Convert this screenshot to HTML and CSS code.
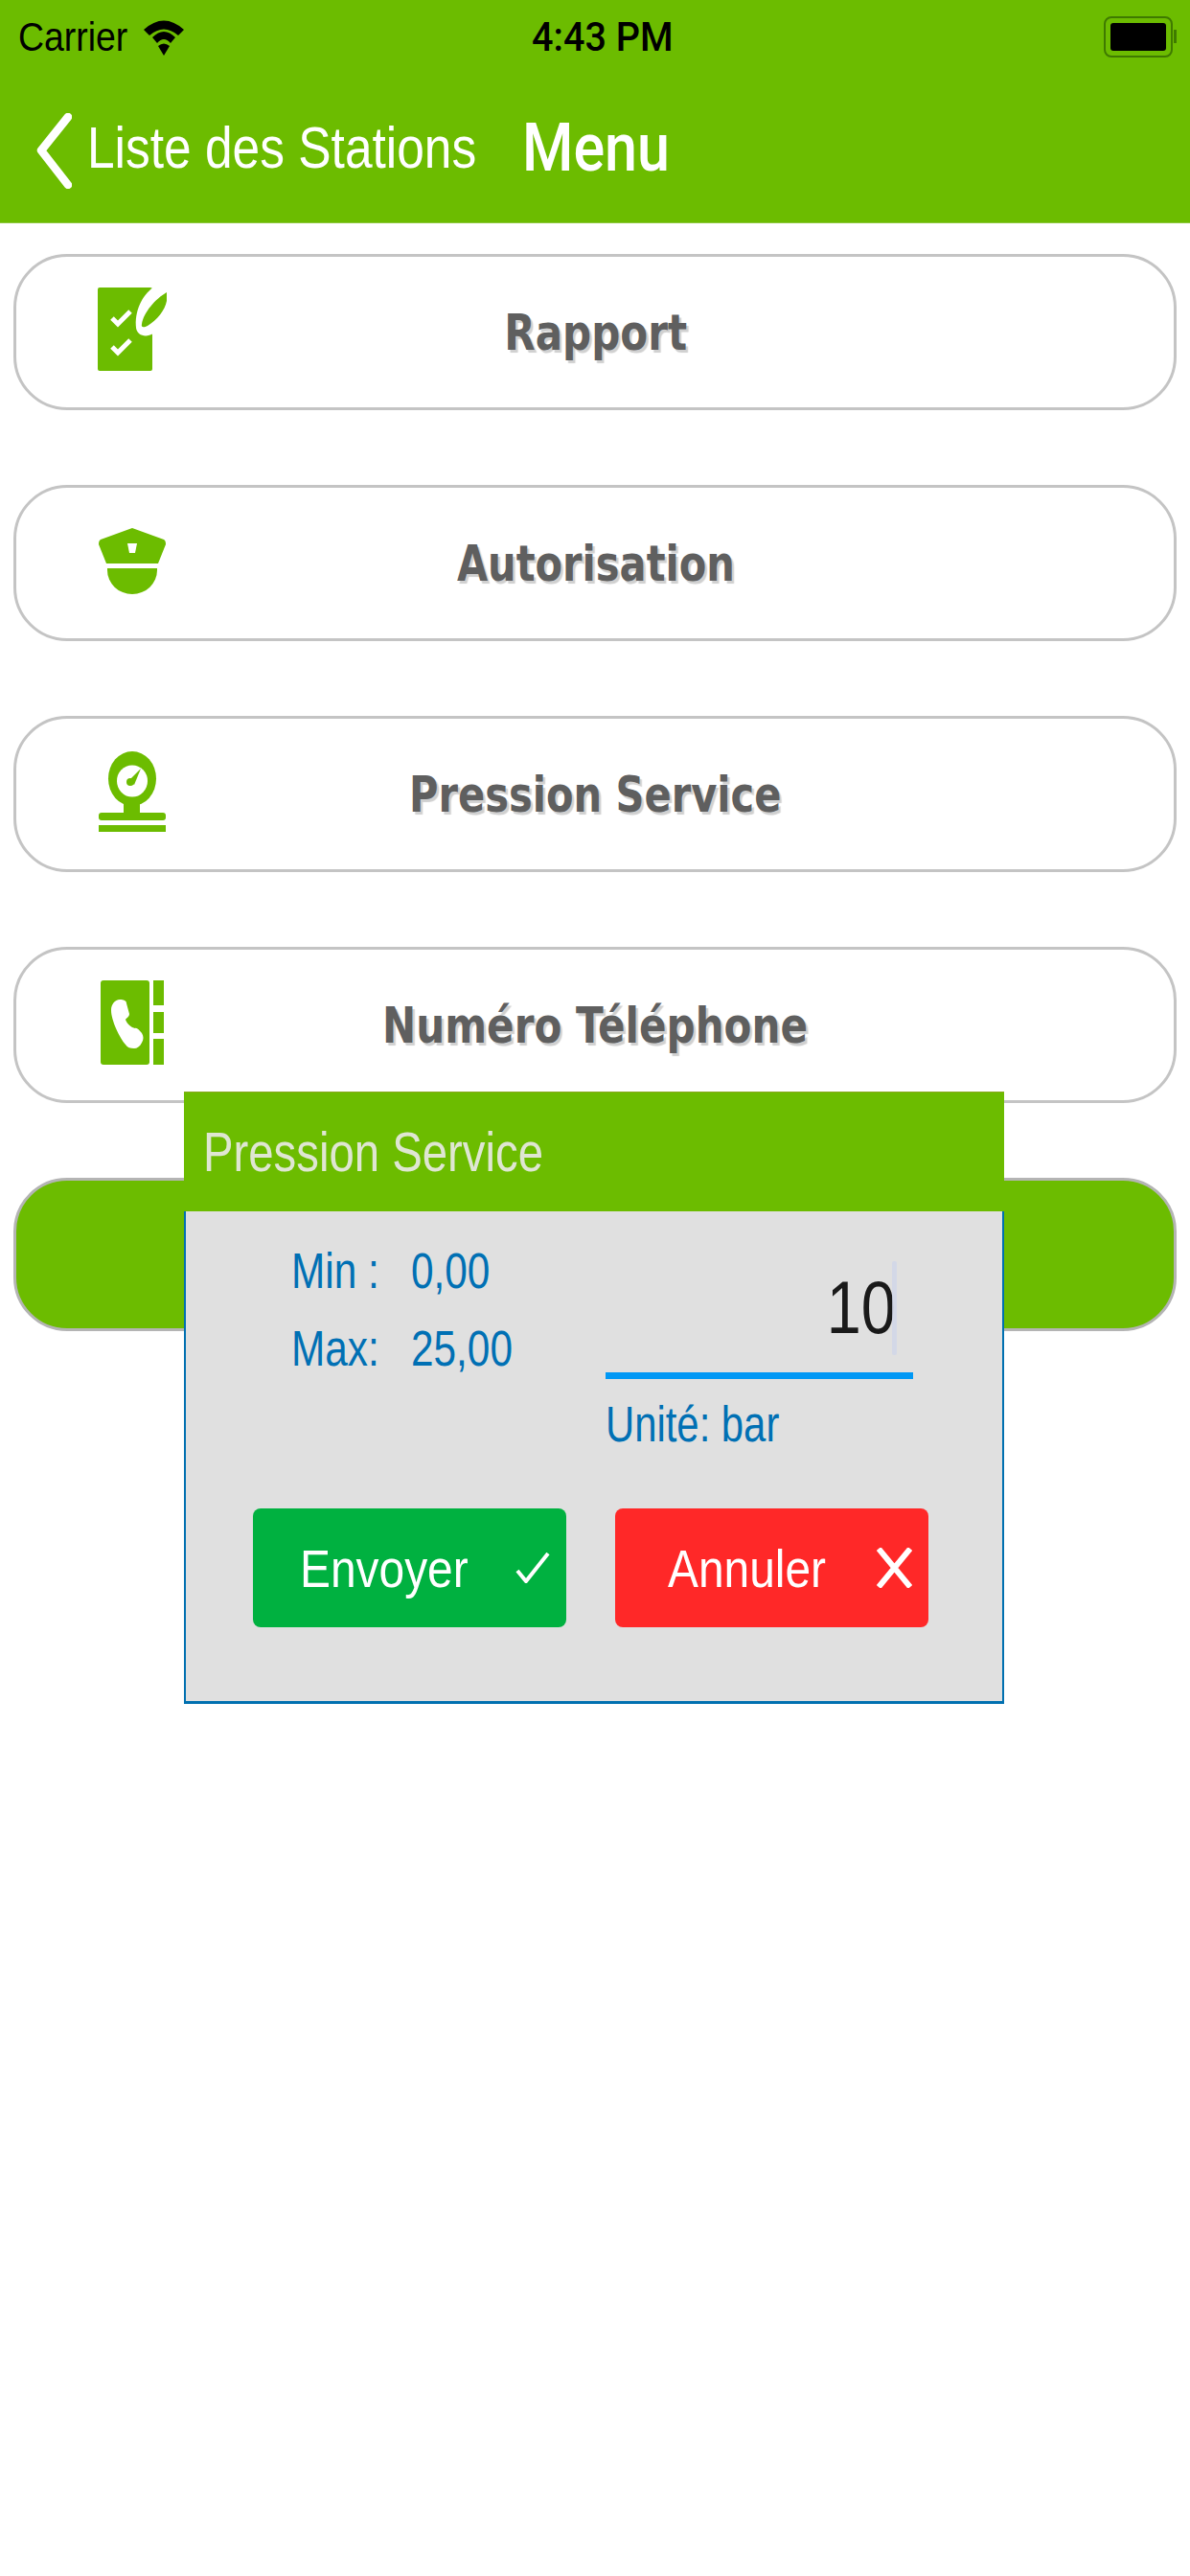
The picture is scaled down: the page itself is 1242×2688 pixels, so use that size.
FILE: index.html
```html
<!DOCTYPE html>
<html lang="fr">
<head>
  <meta charset="UTF-8">
  <title>Menu</title>
  <link rel="stylesheet" href="styles.css">
</head>
<body>

  <div class="header">
    <div class="status-bar">
      <div class="status-left">
        <span class="squeeze carrier">Carrier</span>
        <svg class="wifi" width="42" height="37" viewBox="0 0 42 37">
          <path d="M0 10Q21-9 42 10L36 16Q21 3 6 16Z"/>
          <path d="M9 18Q21 6 33 18L28 24Q21 16 14 24Z"/>
          <path d="M15 27Q21 22 27 27L21 37Z"/>
        </svg>
      </div>
      <span class="squeeze time">4:43 PM</span>
      <div class="battery"><div class="battery-fill"></div></div>
    </div>
    <div class="nav-bar">
      <svg class="back-icon" width="37" height="79" viewBox="0 0 37 79">
        <path d="M33 4L5 39L33 75" fill="none" stroke="#fff" stroke-width="8.5" stroke-linecap="round" stroke-linejoin="round"/>
      </svg>
      <div class="back-label"><span class="squeeze">Liste des Stations</span></div>
      <span class="squeeze nav-title">Menu</span>
    </div>
  </div>

  <div class="menu">
    <div class="menu-item">
      <div class="icon-cell">
        <svg width="72" height="88" viewBox="0 0 72 88">
          <rect width="57" height="87" rx="2" fill="#6cbc00"/>
          <path d="M58 0C46 8 38 26 40 42C41 50 50 53 58 48Z" fill="#fff"/>
          <path d="M72 5C60 12 48 26 46 38C45 42 48 42 52 40C62 34 70 24 72 14Z" fill="#6cbc00"/>
          <path d="M15 32L21 38L34 25M15 62L21 68L34 55" fill="none" stroke="#fff" stroke-width="5"/>
        </svg>
      </div>
      <span class="squeeze menu-label">Rapport</span>
    </div>

    <div class="menu-item">
      <div class="icon-cell">
        <svg width="70" height="70" viewBox="0 0 70 70">
          <path d="M35 1L68 13Q70 14 70 18L62 38H8L0 18Q0 14 2 13Z" fill="#6cbc00"/>
          <path d="M30 17H40L38 27H32Z" fill="#fff"/>
          <path d="M9 43H61V45A26 25 0 0 1 9 45Z" fill="#6cbc00"/>
        </svg>
      </div>
      <span class="squeeze menu-label label-narrow">Autorisation</span>
    </div>

    <div class="menu-item">
      <div class="icon-cell">
        <svg width="70" height="84" viewBox="0 0 70 84">
          <ellipse cx="35" cy="28.5" rx="25" ry="28.5" fill="#6cbc00"/>
          <ellipse cx="35" cy="31" rx="16" ry="16.5" fill="#fff"/>
          <path d="M32 30L44 18L37 35Z" fill="#6cbc00"/>
          <circle cx="33" cy="32" r="4" fill="#6cbc00"/>
          <rect x="26" y="54" width="17" height="12" fill="#6cbc00"/>
          <rect y="64" width="70" height="8" rx="3" fill="#6cbc00"/>
          <rect y="77" width="70" height="7" fill="#6cbc00"/>
        </svg>
      </div>
      <span class="squeeze menu-label label-narrow">Pression Service</span>
    </div>

    <div class="menu-item">
      <div class="icon-cell">
        <svg width="66" height="88" viewBox="0 0 66 88">
          <rect width="51" height="88" rx="3" fill="#6cbc00"/>
          <path d="M11 31C11 25 15 20 20 20C24 20 27 21 27 24L30 35C30 38 27 39 26 41C28 46 32 49 36 50C38 49 40 52 43 55C45 58 45 62 43 65C41 69 38 71 35 71C31 71 28 70 26 67C20 60 11 42 11 31Z" fill="#fff"/>
          <rect x="55" width="11" height="26" fill="#6cbc00"/>
          <rect x="55" y="33" width="11" height="22" fill="#6cbc00"/>
          <rect x="55" y="61" width="11" height="27" fill="#6cbc00"/>
        </svg>
      </div>
      <span class="squeeze menu-label">Numéro Téléphone</span>
    </div>

    <div class="menu-item menu-item-green"></div>
  </div>

  <div class="popup">
    <div class="popup-title"><span class="squeeze">Pression Service</span></div>
    <div class="popup-body">
      <div class="popup-fields">
        <div class="limits">
          <span class="squeeze">Min :</span><span class="squeeze">0,00</span>
          <span class="squeeze">Max:</span><span class="squeeze">25,00</span>
        </div>
        <div class="entry">
          <div class="entry-field">
            <span class="squeeze entry-value">10</span>
            <div class="caret"></div>
          </div>
          <div class="unit"><span class="squeeze">Unité: bar</span></div>
        </div>
      </div>
      <div class="popup-buttons">
        <button class="btn btn-send">
          <span class="squeeze">Envoyer</span>
          <svg width="36" height="32" viewBox="0 0 36 32"><path d="M2 19L11 30L34 1" fill="none" stroke="#fff" stroke-width="4"/></svg>
        </button>
        <button class="btn btn-cancel">
          <span class="squeeze">Annuler</span>
          <svg width="37" height="42" viewBox="0 0 37 42"><path d="M2 1L35 41M35 1L2 41" fill="none" stroke="#fff" stroke-width="6"/></svg>
        </button>
      </div>
    </div>
  </div>

</body>
</html>
```

FILE: styles.css
```css
body {
  margin: 0;
  width: 1242px;
  height: 2688px;
  position: relative;
  overflow: hidden;
  background: #ffffff;
  font-family: "Liberation Sans", Arial, sans-serif;
}

/* the whole screenshot is narrowed horizontally, so the text is too */
.squeeze {
  display: inline-block;
  white-space: nowrap;
  transform: scaleX(0.83);
  transform-origin: left center;
}

.header {
  background: #6cbc00;
  height: 233px;
  border-bottom: 1px solid #8cc63c;
  box-sizing: border-box;
}

.status-bar {
  height: 77px;
  display: flex;
  align-items: center;
  padding: 0 18px 0 19px;
  color: #000000;
}

.status-left {
  width: 536px;
  flex: none;
  display: flex;
  align-items: center;
}

.carrier {
  font-size: 43px;
  width: 131px;
  transform: scaleX(0.87);
}

.wifi {
  margin-top: 1px;
}

.time {
  font-family: Roboto, sans-serif;
  font-weight: 500;
  font-size: 43px;
  margin-bottom: 2px;
  transform: scaleX(0.92);
}

.battery {
  margin-left: auto;
  width: 72px;
  height: 43px;
  box-sizing: border-box;
  padding: 5px;
  border: 2px solid #3f7a00;
  border-radius: 8px;
  position: relative;
}

.battery::after {
  content: "";
  position: absolute;
  right: -6px;
  top: 12px;
  width: 3px;
  height: 14px;
  background: #3f7a00;
}

.battery-fill {
  height: 100%;
  background: #000000;
  border-radius: 3px;
}

.nav-bar {
  height: 152px;
  display: flex;
  align-items: center;
  padding-left: 38px;
  color: #ffffff;
}

.back-icon {
  flex: none;
  margin: 8px 16px 0 0;
}

.back-label {
  width: 454px;
  flex: none;
  font-size: 62px;
}

.nav-title {
  font-family: Roboto, sans-serif;
  font-weight: 500;
  font-size: 71px;
  transform: scaleX(0.86);
}

.menu {
  padding: 32px 14px 0;
  display: flex;
  flex-direction: column;
  gap: 78px;
}

.menu-item {
  height: 163px;
  box-sizing: border-box;
  border: 3px solid #c4c4c4;
  border-radius: 56px;
  display: grid;
  grid-template-columns: 1fr auto 1fr;
  align-items: center;
}

.menu-item-green {
  height: 160px;
  background: #6cbc00;
  border-color: #b4b4b4;
}

.icon-cell {
  width: 72px;
  margin: 0 0 6px 85px;
  display: flex;
  justify-content: center;
}

.menu-label {
  font-family: "DejaVu Sans", sans-serif;
  font-weight: bold;
  font-size: 51px;
  margin: 2px 0 0 1px;
  color: #5f5f5f;
  text-shadow: 3px 3px 1px #d0d0d0;
  transform: scaleX(0.825);
  transform-origin: center;
}

.label-narrow {
  transform: scaleX(0.815);
}

.popup {
  position: absolute;
  left: 192px;
  top: 1139px;
  width: 856px;
  box-sizing: border-box;
  background: #e0e0e0;
  border: solid #0070b0;
  border-width: 0 2px 3px;
}

.popup-title {
  height: 125px;
  margin: 0 -2px;
  padding-left: 20px;
  display: flex;
  align-items: center;
  background: #6cbc00;
  border-top: 1px solid #8aa81e;
  box-sizing: border-box;
  font-size: 57px;
  color: #dfe6d2;
}

.popup-body {
  padding: 22px 0 77px 70px;
}

.popup-fields {
  display: flex;
  font-size: 51px;
  color: #0070b4;
}

.limits {
  width: 368px;
  flex: none;
  padding-left: 40px;
  box-sizing: border-box;
  display: grid;
  grid-template-columns: 125px 1fr;
  grid-auto-rows: 81px;
  align-items: center;
  align-content: start;
}

.entry {
  width: 321px;
  padding-top: 11px;
}

.entry-field {
  height: 142px;
  box-sizing: border-box;
  border-bottom: 7px solid #0098f5;
  display: flex;
  justify-content: flex-end;
  align-items: center;
  padding-right: 17px;
}

.entry-value {
  font-size: 78px;
  color: #1a1a1a;
  transform-origin: right center;
}

.caret {
  width: 5px;
  height: 98px;
  margin-left: -4px;
  background: #cfd6e8;
  border-radius: 2px;
  opacity: 0.8;
}

.unit {
  margin-top: 18px;
  line-height: 60px;
}

.unit .squeeze {
  transform: scaleX(0.82);
}

.popup-buttons {
  margin-top: 57px;
  display: flex;
  gap: 51px;
}

.btn {
  width: 327px;
  height: 124px;
  border: none;
  border-radius: 8px;
  padding: 0 17px 0 49px;
  display: flex;
  align-items: center;
  font-family: "Liberation Sans", Arial, sans-serif;
  font-size: 56px;
  color: #ffffff;
}

.btn .squeeze {
  transform: scaleX(0.855);
}

.btn svg {
  margin-left: auto;
  flex: none;
}

.btn-send {
  background: #00b140;
}

.btn-cancel {
  background: #ff2828;
  padding-left: 55px;
}
```
